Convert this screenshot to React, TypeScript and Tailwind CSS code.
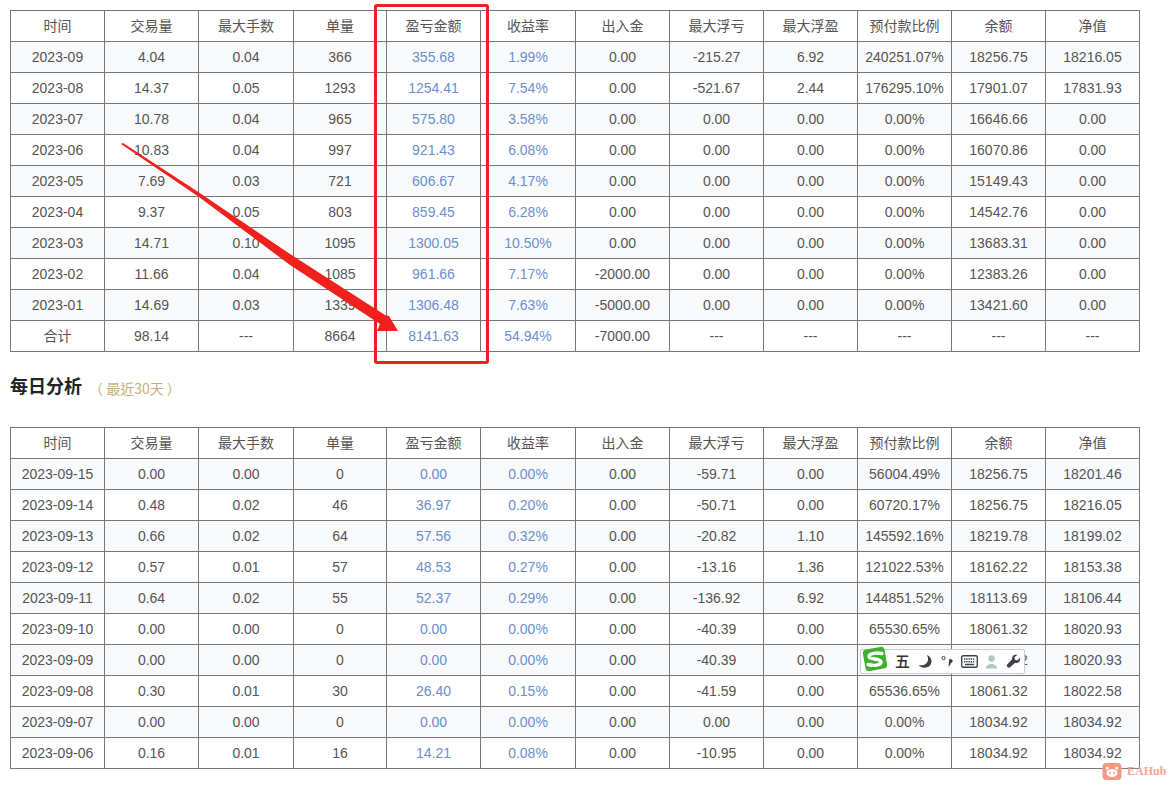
const H = ["时间","交易量","最大手数","单量","盈亏金额","收益率","出入金","最大浮亏","最大浮盈","预付款比例","余额","净值"];
const A = `2023-09 4.04 0.04 366 355.68 1.99% 0.00 -215.27 6.92 240251.07% 18256.75 18216.05
2023-08 14.37 0.05 1293 1254.41 7.54% 0.00 -521.67 2.44 176295.10% 17901.07 17831.93
2023-07 10.78 0.04 965 575.80 3.58% 0.00 0.00 0.00 0.00% 16646.66 0.00
2023-06 10.83 0.04 997 921.43 6.08% 0.00 0.00 0.00 0.00% 16070.86 0.00
2023-05 7.69 0.03 721 606.67 4.17% 0.00 0.00 0.00 0.00% 15149.43 0.00
2023-04 9.37 0.05 803 859.45 6.28% 0.00 0.00 0.00 0.00% 14542.76 0.00
2023-03 14.71 0.10 1095 1300.05 10.50% 0.00 0.00 0.00 0.00% 13683.31 0.00
2023-02 11.66 0.04 1085 961.66 7.17% -2000.00 0.00 0.00 0.00% 12383.26 0.00
2023-01 14.69 0.03 1339 1306.48 7.63% -5000.00 0.00 0.00 0.00% 13421.60 0.00
合计 98.14 --- 8664 8141.63 54.94% -7000.00 --- --- --- --- ---`;
const B = `2023-09-15 0.00 0.00 0 0.00 0.00% 0.00 -59.71 0.00 56004.49% 18256.75 18201.46
2023-09-14 0.48 0.02 46 36.97 0.20% 0.00 -50.71 0.00 60720.17% 18256.75 18216.05
2023-09-13 0.66 0.02 64 57.56 0.32% 0.00 -20.82 1.10 145592.16% 18219.78 18199.02
2023-09-12 0.57 0.01 57 48.53 0.27% 0.00 -13.16 1.36 121022.53% 18162.22 18153.38
2023-09-11 0.64 0.02 55 52.37 0.29% 0.00 -136.92 6.92 144851.52% 18113.69 18106.44
2023-09-10 0.00 0.00 0 0.00 0.00% 0.00 -40.39 0.00 65530.65% 18061.32 18020.93
2023-09-09 0.00 0.00 0 0.00 0.00% 0.00 -40.39 0.00 65530.65% 18061.32 18020.93
2023-09-08 0.30 0.01 30 26.40 0.15% 0.00 -41.59 0.00 65536.65% 18061.32 18022.58
2023-09-07 0.00 0.00 0 0.00 0.00% 0.00 0.00 0.00 0.00% 18034.92 18034.92
2023-09-06 0.16 0.01 16 14.21 0.08% 0.00 -10.95 0.00 0.00% 18034.92 18034.92`;
const W = [94,94,95,93,94,95,94,94,94,94,94,94];

function DataTable({ data }: { data: string }) {
  const rows = data.split("\n").map((r) => r.split(" "));
  return (
    <table className="w-[1129px] table-fixed border-collapse text-center text-[14px] leading-[20px] text-[#555555]">
      <colgroup>{W.map((w, i) => <col key={i} style={{ width: w }} />)}</colgroup>
      <thead>
        <tr className="h-[31px]">
          {H.map((h) => <th key={h} className="border border-[#777777] p-0 font-normal">{h}</th>)}
        </tr>
      </thead>
      <tbody>
        {rows.map((r, i) => (
          <tr key={i} className={i % 2 === 0 ? "h-[31px] bg-[#f9fafc]" : "h-[31px] bg-white"}>
            {r.map((c, j) => (
              <td key={j} className={j === 4 || j === 5 ? "border border-[#777777] p-0 text-[#6a8fd0]" : "border border-[#777777] p-0"}>{c}</td>
            ))}
          </tr>
        ))}
      </tbody>
    </table>
  );
}

export default function App() {
  return (
    <div className="relative h-[786px] w-[1173px] overflow-hidden bg-white pl-[10px] pt-[10px] font-['Liberation_Sans','Noto_Sans_CJK_SC',sans-serif]">
      <DataTable data={A} />
      <div className="flex h-[75px] items-center pb-[6px]">
        <h2 className="text-[18px] font-bold leading-[24px] text-[#222222]">每日分析</h2>
        <span className="ml-[7px] mt-[2px] font-['Noto_Sans_CJK_TC',sans-serif] text-[14px] leading-[20px] text-[#c9ad7c]">（ 最近30天 ）</span>
      </div>
      <DataTable data={B} />

      <div className="absolute left-[374px] top-[4px] h-[360px] w-[115px] rounded-[3px] border-[3px] border-[#e6231e]" />
      <svg className="absolute left-0 top-0" width="1173" height="786" viewBox="0 0 1173 786" fill="none">
        <polygon points="121,144 123,143 199,192.5 290,254 385,315 389,316 398,331 377,331 380,324 290,265 199,197" fill="#f0211c" />
      </svg>

      <div className="absolute left-[860px] top-[649px] flex h-[25px] w-[165px] items-center rounded-[2px] border border-[#c4ccd8] bg-white pl-[34px]">
        <svg className="absolute left-[0px] top-[-5px]" width="28" height="28" viewBox="0 0 28 28">
          <rect x="3" y="3" width="22" height="22" rx="4" transform="rotate(-10 14 14)" fill="#3db02c" />
          <path d="M21 8.5 C16 7.5 8 8 8 11.5 C8 15 20 13 20 17 C20 20.5 12 21 7 19.5" fill="none" stroke="#fff" strokeWidth="3.4" strokeLinecap="round" />
        </svg>
        <span className="text-[15px] font-medium leading-[20px] text-[#333333]">五</span>
        <svg className="ml-[7px]" width="16" height="15" viewBox="0 0 16 16">
          <path d="M10 1 C13 6 11 13 1 12 C5 16 14 16 15 8 C15 5 13 2 10 1Z" fill="#3a4250" />
        </svg>
        <svg className="ml-[8px]" width="12" height="15" viewBox="0 0 12 15">
          <circle cx="2.5" cy="4" r="1.6" fill="none" stroke="#3a4250" strokeWidth="1" />
          <path d="M8 6 a1.8 1.8 0 1 1 1.6 2.8 q0 2.2-2 3.2" fill="#3a4250" stroke="#3a4250" strokeWidth="0.6" />
        </svg>
        <svg className="ml-[8px]" width="17" height="13" viewBox="0 0 17 13">
          <rect x="0.7" y="0.7" width="15.6" height="11.6" rx="1.5" fill="#fff" stroke="#3a4250" strokeWidth="1.4" />
          <path d="M3 4h11M3 6.7h11" stroke="#3a4250" strokeWidth="1.5" strokeDasharray="1.4 0.8" />
          <path d="M4 9.5h9" stroke="#3a4250" strokeWidth="1.5" />
        </svg>
        <svg className="ml-[7px]" width="13" height="16" viewBox="0 0 15 17">
          <circle cx="7.5" cy="4.5" r="3.7" fill="#b5c9c2" />
          <path d="M1 16 C1 9 14 9 14 16 Z" fill="#b5c9c2" />
        </svg>
        <svg className="ml-[8px]" width="15" height="15" viewBox="0 0 16 16">
          <path d="M15 4 L12 7 L9.5 6 L9 3.5 L12 1 C9 0 6 2 6.5 5.5 L1 11.5 C0 13 2.5 15.5 4 14.5 L9.5 9.5 C13 10.5 16 7.5 15 4Z" fill="#3a4250" />
        </svg>
      </div>

      <div className="absolute left-[1102px] top-[761px] flex items-center gap-[5px]">
        <svg width="20" height="20" viewBox="0 0 20 20">
          <rect x="0.5" y="2" width="19" height="17" rx="4" fill="#f59a80" />
          <path d="M3 3 L6 6 M17 3 L14 6" stroke="#f59a80" strokeWidth="2" />
          <ellipse cx="10" cy="12" rx="5.5" ry="4" fill="#fff" />
          <circle cx="8" cy="12" r="1" fill="#f59a80" />
          <circle cx="12" cy="12" r="1" fill="#f59a80" />
          <rect x="4" y="6" width="2.5" height="2.5" fill="#fff" />
          <rect x="13.5" y="6" width="2.5" height="2.5" fill="#fff" />
        </svg>
        <span className="font-['Liberation_Serif',serif] text-[12px] font-bold leading-[16px] text-[#f3a692]">EAHub</span>
      </div>
    </div>
  );
}
